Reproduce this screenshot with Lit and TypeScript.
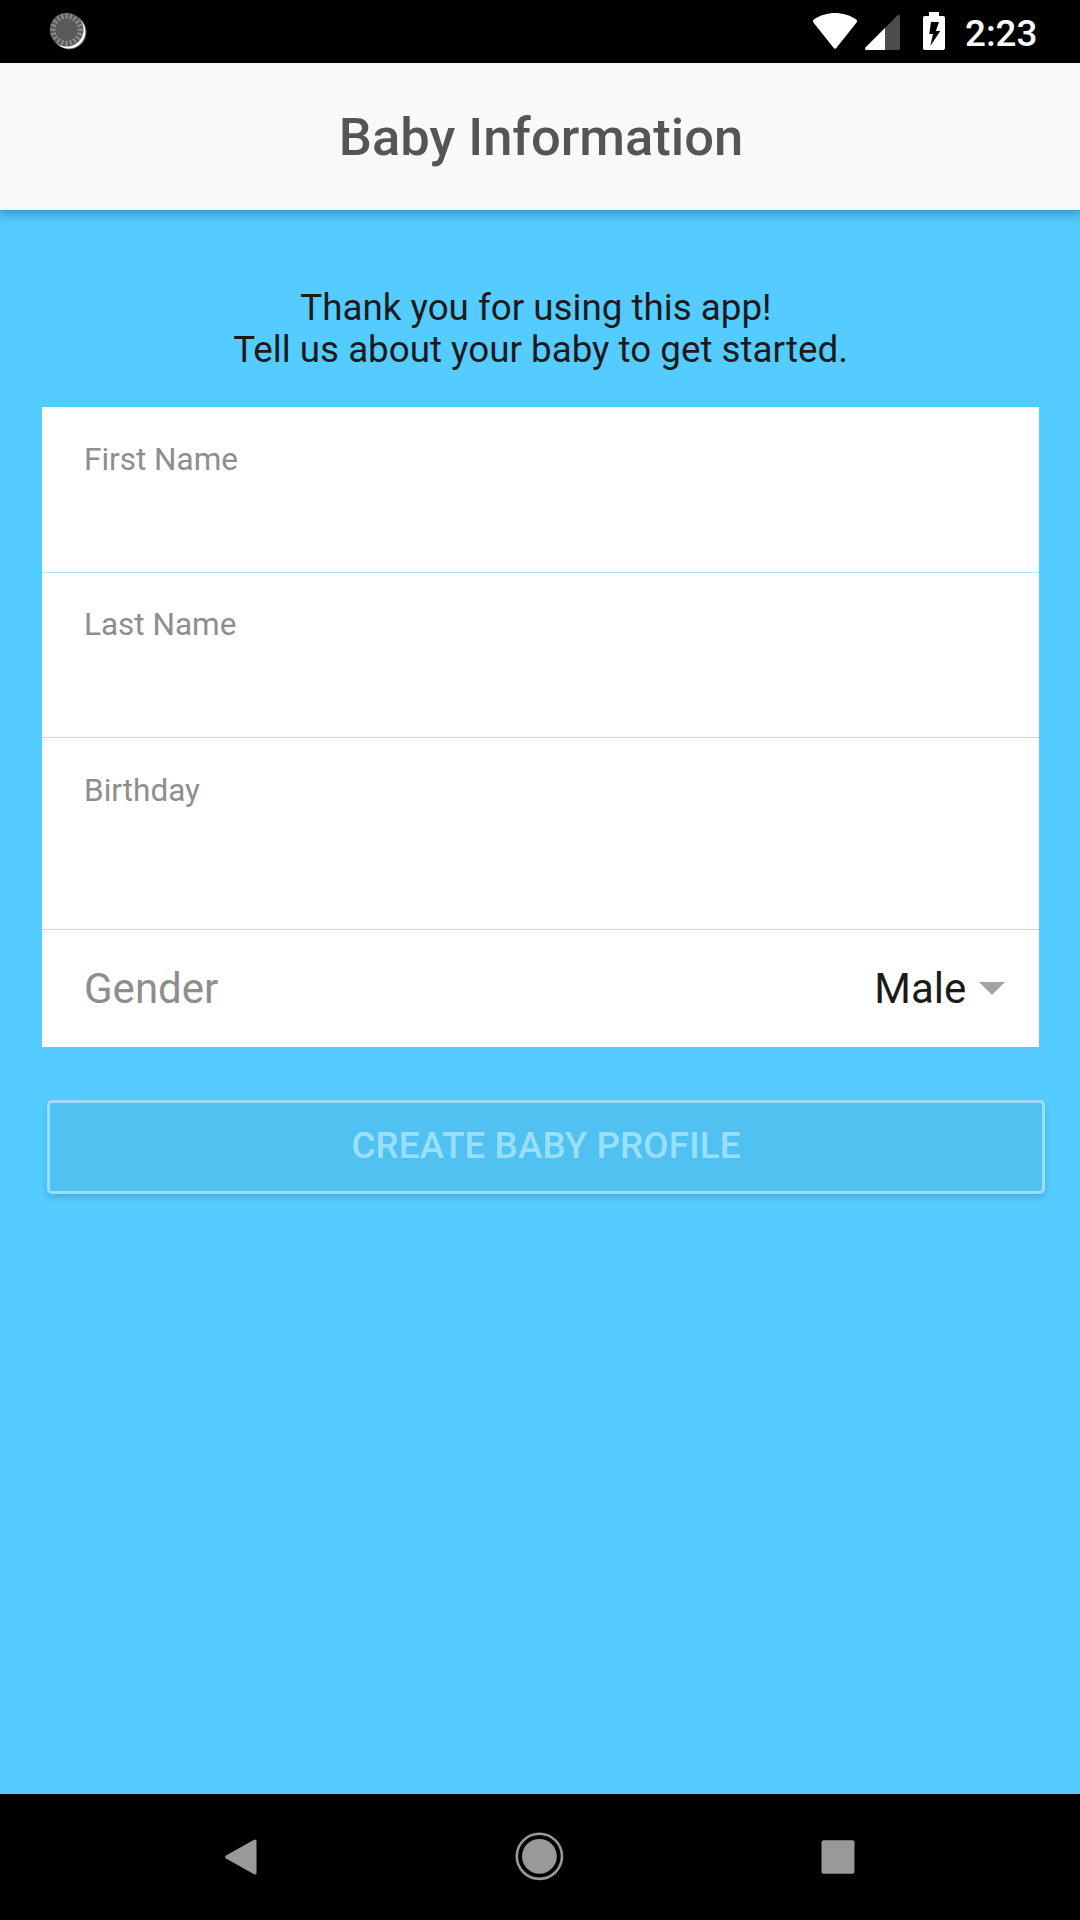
import { LitElement, html, svg, css } from "lit";
import { customElement, property } from "lit/decorators.js";

@customElement("status-bar")
class StatusBar extends LitElement {
  static styles = css`
    :host { display: flex; height: 63px; background: #000; color: #fff; justify-content: space-between; }
    svg { display: block; flex: none; }
    .right { display: flex; padding-right: 43px; }
    .clock { width: 72px; margin-left: 1px; font-size: 36.75px; font-weight: 500; line-height: 43px; padding-top: 12px; white-space: nowrap; }
  `;
  render() {
    const ticks = Array.from({ length: 20 }, (_, i) => i * 18);
    return html`
      <svg width="120" height="63" viewBox="0 0 120 63">
        <circle cx="69.2" cy="32.1" r="17.3" fill="#666" />
        <circle cx="68.7" cy="31.7" r="16.7" fill="#fff" />
        <circle cx="66.6" cy="29.7" r="16.9" fill="#5a5a5a" />
        ${ticks.map((a) => svg`<line x1="66.6" y1="13.4" x2="66.6" y2="18.6" stroke="#8c8c8c" stroke-width="2" transform="rotate(${a} 66.6 29.7)" />`)}
      </svg>
      <div class="right">
        <svg width="164" height="63" viewBox="800 0 164 63">
          <path d="M813.4 22.4 Q812 20.8 813.8 19.6 C826 10.8 844 10.8 856.2 19.6 Q858 20.8 856.6 22.4 L836.5 47.8 Q835 49.6 833.5 47.8 Z" fill="#fff" />
          <path d="M866.3 50 Q864.2 49.6 865.5 47.6 L897.4 15.4 Q899.4 14 900 16.2 V48.4 Q900 50 898.4 50 Z" fill="#4d4d4d" />
          <path d="M866.3 50 Q864.2 49.6 865.5 47.6 L885 28 V50 Z" fill="#fff" />
          <path d="M929 12 H939 V16 H943.2 Q945 16 945 17.8 V48.2 Q945 50 943.2 50 H924.8 Q923 50 923 48.2 V17.8 Q923 16 924.8 16 H929 Z" fill="#fff" />
          <path d="M931 22 H939 L935.8 31 H940.3 L930.3 46 L933 34 H929.3 Z" fill="#000" />
        </svg>
        <div class="clock">2:23</div>
      </div>
    `;
  }
}

@customElement("form-field")
class FormField extends LitElement {
  @property() label = "";
  static styles = css`
    :host { display: block; box-sizing: border-box; padding: 33px 42px 0; font-size: 31.5px; line-height: 38px; color: #8e8e8e; }
  `;
  render() {
    return html`<label>${this.label}</label>`;
  }
}

@customElement("nav-bar")
class NavBar extends LitElement {
  static styles = css`
    :host { display: flex; height: 126px; background: #000; justify-content: center; }
    svg { display: block; width: 298px; height: 126px; }
  `;
  render() {
    return html`
      <svg viewBox="93 1794 298 126">
        <path d="M226 1858.6 Q224 1857 226 1855.4 L253.6 1840 Q256.5 1838.6 256.5 1841.4 V1872.8 Q256.5 1875.6 253.6 1874 Z" fill="#999" />
      </svg>
      <svg viewBox="391 1794 298 126">
        <circle cx="539.4" cy="1856.3" r="22.6" fill="none" stroke="#999" stroke-width="2.6" />
        <circle cx="539.4" cy="1856.3" r="17.4" fill="#999" />
      </svg>
      <svg viewBox="689 1794 298 126">
        <rect x="821.5" y="1840.3" width="33" height="33.4" rx="2" fill="#999" />
      </svg>
    `;
  }
}

@customElement("app-root")
class AppRoot extends LitElement {
  static styles = css`
    :host { display: flex; flex-direction: column; width: 1080px; height: 1920px; background: #54ccff; font-family: Roboto, sans-serif; overflow: hidden; }
    .header { display: flex; align-items: center; justify-content: center; height: 147px; padding-left: 2px; background: #f9f9f9; box-shadow: 0 3px 10px 1px rgba(0, 0, 0, 0.3); }
    .title { margin: 0; font-size: 52.5px; font-weight: 500; line-height: 62px; color: #555; white-space: nowrap; }
    main { flex: 1; display: flex; flex-direction: column; }
    .intro { margin: 77px 0 0; padding-left: 1px; height: 120px; text-align: center; font-size: 36.75px; line-height: 42px; color: #1a1a1a; white-space: pre; }
    .card { margin: 0 40.7px 0 42px; height: 640px; display: flex; flex-direction: column; background: #fff; }
    .row { flex: none; border-bottom: 1px solid #a9e5fb; }
    .first { height: 166px; padding-top: 34px; }
    .name { height: 165px; }
    .date { height: 192px; padding-top: 34px; }
    .gender { flex: 1; display: flex; align-items: center; padding: 0 34px 1px 42px; font-size: 42px; color: #8e8e8e; }
    .value { margin-left: auto; color: #1a1a1a; }
    .arrow { display: block; margin-left: 13px; width: 26px; height: 13px; }
    .submit { box-sizing: border-box; margin: 53px 35.3px 0 47.3px; height: 94px; padding: 0 0 3px; border: 3px solid #98dfff; border-radius: 5px; background: #50c1f0; color: #98e0ff; font: 500 36.75px Roboto, sans-serif; letter-spacing: 0.12px; box-shadow: 0 4px 6px rgba(0, 0, 0, 0.15); }
  `;
  render() {
    return html`
      <status-bar></status-bar>
      <header class="header"><h1 class="title">Baby Information</h1></header>
      <main>
        <p class="intro">${"Thank you for using this app!\u00a0\nTell us about your baby to get started."}</p>
        <section class="card">
          <form-field class="row first" label="First Name"></form-field>
          <form-field class="row name" label="Last Name"></form-field>
          <form-field class="row date" label="Birthday"></form-field>
          <div class="gender">
            <span>Gender</span>
            <span class="value">Male</span>
            <svg class="arrow" viewBox="0 0 26 13"><path d="M0 0 H26 L13 13 Z" fill="#a3a3a3" /></svg>
          </div>
        </section>
        <button class="submit">CREATE BABY PROFILE</button>
      </main>
      <nav-bar></nav-bar>
    `;
  }
}
